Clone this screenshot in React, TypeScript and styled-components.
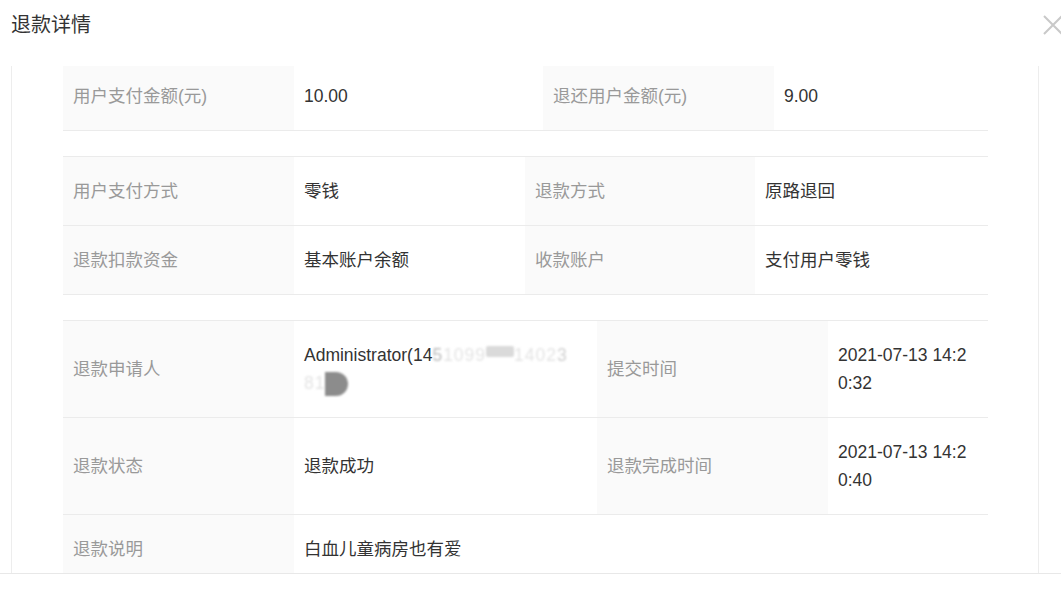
import { Fragment } from "react";
import styled, { createGlobalStyle } from "styled-components";

const GlobalStyle = createGlobalStyle`
    html, body {
        margin: 0;
        padding: 0;
        background: #fff;
        overflow: hidden;
    }
    body {
        font-family: "Liberation Sans", "Noto Sans CJK SC", sans-serif;
        color: #333;
    }
`;

const Modal = styled.div`
    width: 1061px;
    height: 594px;
    display: flex;
    flex-direction: column;
    background: #fff;
`;

const Header = styled.div`
    height: 66px;
    box-sizing: border-box;
    padding: 13px 0 0 11px;
    display: flex;
    justify-content: space-between;
    align-items: flex-start;
`;

const Title = styled.h3`
    margin: 0;
    font-size: 20px;
    line-height: 24px;
    font-weight: 400;
    color: #333;
`;

const CloseButton = styled.span`
    display: block;
    width: 20px;
    height: 20px;
    margin-top: 2px;
    margin-right: -2px;
    cursor: pointer;
`;

const Body = styled.div`
    height: 507px;
    margin: 0 22px 0 11px;
    border-left: 1px solid #ededed;
    border-right: 1px solid #ededed;
    overflow: hidden;
    padding-left: 51px;
`;

/* content is scrolled a little, like the original dialog */
const Scroller = styled.div`
    margin-top: -5px;
    width: 925px;
    display: flex;
    flex-direction: column;
    gap: 25px;
`;

const Section = styled.div<{ $cols: string }>`
    display: grid;
    grid-template-columns: ${(p) => p.$cols};
    border-top: 1px solid #ebebeb;
`;

const Cell = styled.div<{ $label?: boolean; $span?: number }>`
    grid-column: span ${(p) => p.$span || 1};
    padding: 20px 14px 20px 10px;
    font-size: 17.5px;
    line-height: 28px;
    border-bottom: 1px solid #ebebeb;
    background: ${(p) => (p.$label ? "#fafafa" : "#fff")};
    color: ${(p) => (p.$label ? "#999" : "#333")};
    word-break: break-all;
    display: flex;
    align-items: center;
`;

const ValueLines = styled.div`
    display: flex;
    flex-direction: column;
`;

const Faint = styled.span<{ $tone?: string }>`
    color: ${(p) => p.$tone || "#e4e4e4"};
    filter: blur(1px);
    letter-spacing: 1px;
`;

const Blob = styled.span<{ $w: number; $h: number; $bg: string; $round?: boolean; $lift?: number }>`
    display: inline-block;
    width: ${(p) => p.$w}px;
    height: ${(p) => p.$h}px;
    background: ${(p) => p.$bg};
    border-radius: ${(p) => (p.$round ? `0 ${p.$h / 2}px ${p.$h / 2}px 0` : "2px")};
    filter: blur(1px);
    vertical-align: ${(p) => (p.$lift ? `${p.$lift}px` : "middle")};
`;

const Footer = styled.div`
    flex: 1;
    border-top: 1px solid #e8e8e8;
`;

type Item = { label: string; value: React.ReactNode; span?: number };

const amount: Item[] = [
    { label: "用户支付金额(元)", value: "10.00" },
    { label: "退还用户金额(元)", value: "9.00" },
];

const payment: Item[] = [
    { label: "用户支付方式", value: "零钱" },
    { label: "退款方式", value: "原路退回" },
    { label: "退款扣款资金", value: "基本账户余额" },
    { label: "收款账户", value: "支付用户零钱" },
];

const applicant = (
    <ValueLines>
        <span>
            Administrator(14<Faint $tone="#bbb">5</Faint>
            <Faint>1099</Faint>
            <Blob $w={28} $h={11} $bg="#dadada" $lift={4} />
            <Faint>1402</Faint>
            <Faint $tone="#d0d0d0">3</Faint>
        </span>
        <span>
            <Faint>81</Faint>
            <Blob $w={23} $h={24} $bg="#8c8c8c" $round />
        </span>
    </ValueLines>
);

const record: Item[] = [
    { label: "退款申请人", value: applicant },
    { label: "提交时间", value: "2021-07-13 14:20:32" },
    { label: "退款状态", value: "退款成功" },
    { label: "退款完成时间", value: "2021-07-13 14:20:40" },
    { label: "退款说明", value: "白血儿童病房也有爱", span: 3 },
];

const DetailSection = ({ cols, items }: { cols: string; items: Item[] }) => (
    <Section $cols={cols}>
        {items.map((item) => (
            <Fragment key={item.label}>
                <Cell $label>{item.label}</Cell>
                <Cell $span={item.span}>{item.value}</Cell>
            </Fragment>
        ))}
    </Section>
);

const App = () => {
    return (
        <>
            <GlobalStyle />
            <Modal>
                <Header>
                    <Title>退款详情</Title>
                    <CloseButton>
                        <svg width="20" height="20" viewBox="0 0 20 20">
                            <path d="M1 1 L19 19 M19 1 L1 19" stroke="#c9c9c9" strokeWidth="2" fill="none" />
                        </svg>
                    </CloseButton>
                </Header>
                <Body>
                    <Scroller>
                        <DetailSection cols="231px 249px 231px 214px" items={amount} />
                        <DetailSection cols="231px 231px 230px 233px" items={payment} />
                        <DetailSection cols="231px 303px 231px 160px" items={record} />
                    </Scroller>
                </Body>
                <Footer />
            </Modal>
        </>
    );
};

export default App;
